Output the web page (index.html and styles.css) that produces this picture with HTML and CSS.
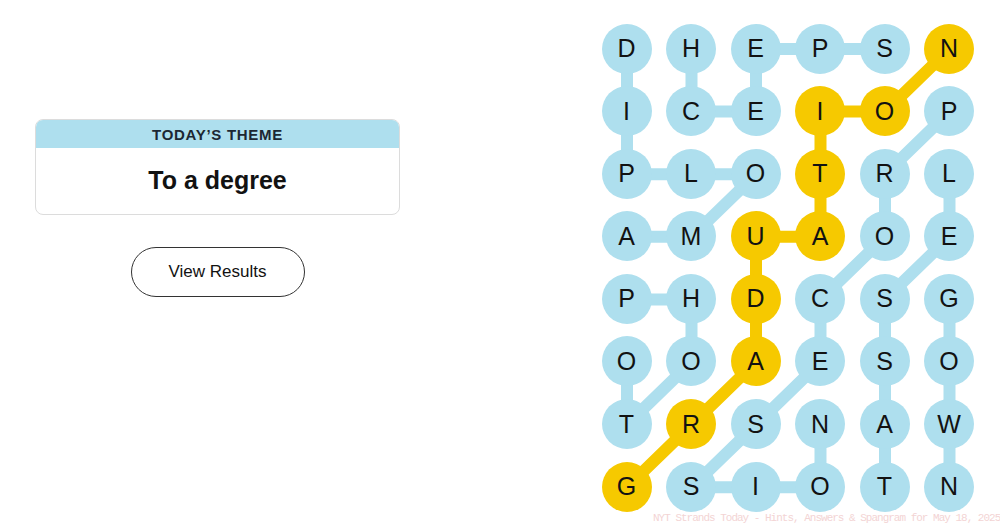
FILE: index.html
```html
<!DOCTYPE html>
<html lang="en">
<head>
    <meta charset="UTF-8">
    <meta name="viewport" content="width=device-width, initial-scale=1.0">
    <title>Strands - Results</title>
    <link rel="stylesheet" href="styles.css">
</head>
<body>
    <div class="page">
        <div class="theme-panel">
            <div class="theme-card">
                <div class="theme-label">Today&rsquo;s Theme</div>
                <div class="theme-title">To a degree</div>
            </div>
            <button class="results-button">View Results</button>
        </div>

        <div class="board">
            <!-- connectors between found letters -->
            <svg class="board-lines" width="372.5" height="488.2" viewBox="0 0 372.5 488.2">
                <g class="line-word">
                    <polyline points="25,25 25,87.6 25,150.2 89.5,150.2 154,150.2 89.5,212.8 25,212.8"/>
                    <polyline points="283,25 218.5,25 154,25 154,87.6 89.5,87.6 89.5,25"/>
                    <polyline points="347.5,87.6 283,150.2 283,212.8 218.5,275.4 218.5,338 154,400.6 89.5,463.2 154,463.2 218.5,463.2 218.5,400.6"/>
                    <polyline points="283,463.2 283,400.6 283,338 283,275.4 347.5,212.8 347.5,150.2"/>
                    <polyline points="347.5,275.4 347.5,338 347.5,400.6 347.5,463.2"/>
                    <polyline points="25,275.4 89.5,275.4 89.5,338 25,400.6 25,338"/>
                </g>
                <g class="line-spangram">
                    <polyline points="25,463.2 89.5,400.6 154,338 154,275.4 154,212.8 218.5,212.8 218.5,150.2 218.5,87.6 283,87.6 347.5,25"/>
                </g>
            </svg>

            <div class="cell">D</div>
            <div class="cell">H</div>
            <div class="cell">E</div>
            <div class="cell">P</div>
            <div class="cell">S</div>
            <div class="cell spangram">N</div>

            <div class="cell">I</div>
            <div class="cell">C</div>
            <div class="cell">E</div>
            <div class="cell spangram">I</div>
            <div class="cell spangram">O</div>
            <div class="cell">P</div>

            <div class="cell">P</div>
            <div class="cell">L</div>
            <div class="cell">O</div>
            <div class="cell spangram">T</div>
            <div class="cell">R</div>
            <div class="cell">L</div>

            <div class="cell">A</div>
            <div class="cell">M</div>
            <div class="cell spangram">U</div>
            <div class="cell spangram">A</div>
            <div class="cell">O</div>
            <div class="cell">E</div>

            <div class="cell">P</div>
            <div class="cell">H</div>
            <div class="cell spangram">D</div>
            <div class="cell">C</div>
            <div class="cell">S</div>
            <div class="cell">G</div>

            <div class="cell">O</div>
            <div class="cell">O</div>
            <div class="cell spangram">A</div>
            <div class="cell">E</div>
            <div class="cell">S</div>
            <div class="cell">O</div>

            <div class="cell">T</div>
            <div class="cell spangram">R</div>
            <div class="cell">S</div>
            <div class="cell">N</div>
            <div class="cell">A</div>
            <div class="cell">W</div>

            <div class="cell spangram">G</div>
            <div class="cell">S</div>
            <div class="cell">I</div>
            <div class="cell">O</div>
            <div class="cell">T</div>
            <div class="cell">N</div>
        </div>
    </div>
    <div class="watermark">NYT Strands Today - Hints, Answers &amp; Spangram for May 18, 2025</div>
</body>
</html>
```

FILE: styles.css
```css
body {
    font-family: 'Liberation Sans', 'Helvetica', 'Arial', sans-serif;
    margin: 0;
    background-color: #fff;
    color: #121212;
    height: 531px;
    overflow: hidden;
    position: relative;
}

.page {
    display: flex;
    align-items: flex-start;
}

.theme-panel {
    width: 365px;
    margin-left: 35px;
    padding-top: 119px;
    display: flex;
    flex-direction: column;
    align-items: center;
}

.theme-card {
    width: 100%;
    box-sizing: border-box;
    border: 1px solid #dcdcdc;
    border-radius: 8px;
    overflow: hidden;
}

.theme-label {
    background-color: #aedfee;
    height: 28px;
    line-height: 29px;
    text-align: center;
    text-transform: uppercase;
    font-size: 15px;
    font-weight: bold;
    letter-spacing: 0.7px;
    color: #1c2733;
}

.theme-title {
    height: 66px;
    line-height: 64px;
    text-align: center;
    font-size: 25px;
    font-weight: bold;
    color: #121212;
}

.results-button {
    margin-top: 32px;
    width: 174px;
    height: 50px;
    border: 1px solid #333;
    border-radius: 25px;
    background-color: #fff;
    font-family: inherit;
    font-size: 17px;
    color: #121212;
    cursor: pointer;
}

.board {
    position: relative;
    margin-left: auto;
    margin-right: 26px;
    margin-top: 23.5px;
    display: grid;
    grid-template-columns: repeat(6, 50px);
    grid-auto-rows: 50px;
    column-gap: 14.5px;
    row-gap: 12.6px;
}

.board-lines {
    position: absolute;
    left: 0;
    top: 0;
}

.board-lines polyline {
    fill: none;
    stroke-width: 12;
    stroke-linejoin: round;
}

.line-word polyline {
    stroke: #aedfee;
}

.line-spangram polyline {
    stroke: #f6c900;
}

.cell {
    position: relative;
    width: 50px;
    height: 50px;
    border-radius: 50%;
    background-color: #aedfee;
    display: flex;
    align-items: center;
    justify-content: center;
    font-size: 25px;
    color: #121212;
}

.cell.spangram {
    background-color: #f6c900;
}

/* faint watermark over the bottom edge */
.watermark {
    position: absolute;
    left: 653px;
    top: 512px;
    white-space: nowrap;
    font-family: 'Liberation Mono', monospace;
    font-size: 11px;
    letter-spacing: -1px;
    color: #f3d4d4;
}
```
